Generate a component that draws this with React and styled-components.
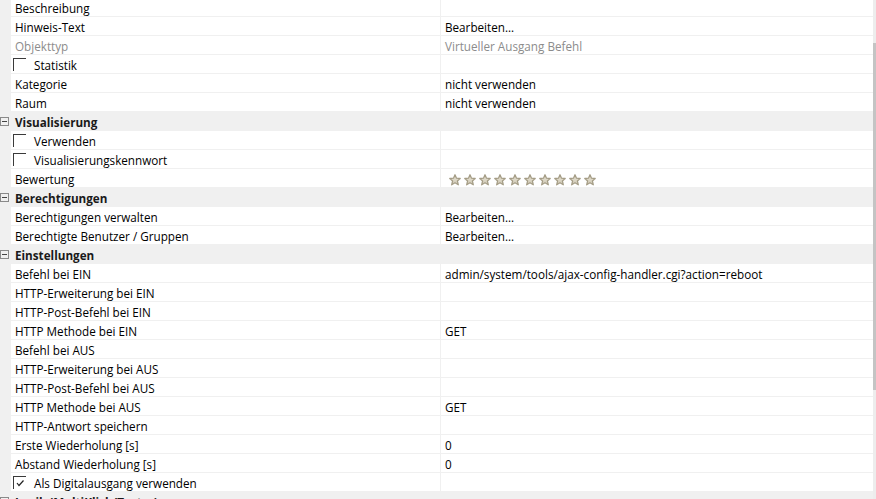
import React from "react";
import styled, { createGlobalStyle } from "styled-components";

/* ================= STYLES ================= */

const GlobalStyle = createGlobalStyle`
  html, body {
    margin: 0;
    padding: 0;
    background: #ffffff;
    overflow: hidden;
  }
  body {
    font-family: "Segoe UI", "Open Sans", "Noto Sans", sans-serif;
    font-size: 11.7px;
    color: #000;
  }
`;

const Frame = styled.div`
  width: 876px;
  height: 499px;
  display: flex;
  overflow: hidden;
`;

const Grid = styled.div`
  flex: 1;
  display: flex;
  flex-direction: column;
  margin-top: -2px;
`;

const Row = styled.div`
  display: grid;
  grid-template-columns: 11px 430px 1fr;
  height: 19px;
  flex-shrink: 0;
`;

const Gutter = styled.div`
  background: #f0f0f0;
`;

const Cell = styled.div`
  display: flex;
  align-items: center;
  box-sizing: border-box;
  height: 19px;
  padding-top: 3px;
  border-bottom: 1px solid #f0f0f0;
  color: ${({ $muted }) => ($muted ? "#8c8c8c" : "#000")};
  line-height: 15px;
  white-space: nowrap;
`;

const NameCell = styled(Cell)`
  gap: 8px;
  padding-left: ${({ $check }) => ($check ? "2px" : "4px")};
  border-right: 1px solid #f0f0f0;
`;

const ValueCell = styled(Cell)`
  padding-left: 4px;
`;

const HeaderRow = styled.div`
  height: 19px;
  box-sizing: border-box;
  padding-top: 1px;
  flex-shrink: 0;
  display: flex;
  align-items: center;
  background: #f0f0f0;
  font-weight: 700;
  color: #1a1a1a;
  white-space: nowrap;
`;

const Toggle = styled.span`
  width: 7px;
  height: 7px;
  margin: -1px 6px 0 0;
  border: 1px solid #8a8a8a;
  position: relative;
  flex-shrink: 0;

  &::after {
    content: "";
    position: absolute;
    left: 1px;
    right: 1px;
    top: 3px;
    height: 1px;
    background: #444;
  }
`;

const Box = styled.span`
  width: 13px;
  height: 13px;
  margin-top: -2px;
  box-sizing: border-box;
  border-top: 1px solid #3a3a3a;
  border-left: 1px solid #3a3a3a;
  flex-shrink: 0;
  display: flex;
  align-items: center;
  justify-content: center;
`;

const Stars = styled.div`
  display: flex;
  gap: 3px;
  padding-left: 4px;
`;

const Scrollbar = styled.div`
  width: 3px;
  background: #ededed;
  display: flex;
  flex-direction: column;
  padding-top: 43px;
`;

const Thumb = styled.div`
  height: 347px;
  background: #c4c4c4;
`;

/* ================= DATA ================= */

const sections = [
  {
    rows: [
      { name: "Beschreibung" },
      { name: "Hinweis-Text", value: "Bearbeiten..." },
      { name: "Objekttyp", value: "Virtueller Ausgang Befehl", muted: true },
      { name: "Statistik", check: true },
      { name: "Kategorie", value: "nicht verwenden" },
      { name: "Raum", value: "nicht verwenden" },
    ],
  },
  {
    title: "Visualisierung",
    rows: [
      { name: "Verwenden", check: true },
      { name: "Visualisierungskennwort", check: true },
      { name: "Bewertung", stars: 10 },
    ],
  },
  {
    title: "Berechtigungen",
    rows: [
      { name: "Berechtigungen verwalten", value: "Bearbeiten..." },
      { name: "Berechtigte Benutzer / Gruppen", value: "Bearbeiten..." },
    ],
  },
  {
    title: "Einstellungen",
    rows: [
      { name: "Befehl bei EIN", value: "admin/system/tools/ajax-config-handler.cgi?action=reboot" },
      { name: "HTTP-Erweiterung bei EIN" },
      { name: "HTTP-Post-Befehl bei EIN" },
      { name: "HTTP Methode bei EIN", value: "GET" },
      { name: "Befehl bei AUS" },
      { name: "HTTP-Erweiterung bei AUS" },
      { name: "HTTP-Post-Befehl bei AUS" },
      { name: "HTTP Methode bei AUS", value: "GET" },
      { name: "HTTP-Antwort speichern" },
      { name: "Erste Wiederholung [s]", value: "0" },
      { name: "Abstand Wiederholung [s]", value: "0" },
      { name: "Als Digitalausgang verwenden", check: true, checked: true },
    ],
  },
  { title: "Logik (MultiKlick/Taster)", rows: [] },
];

/* ================= COMPONENTS ================= */

const Star = () => (
  <svg width="12" height="12" viewBox="0 0 12 12">
    <defs>
      <linearGradient id="starFill" x1="0" y1="0" x2="0" y2="1">
        <stop offset="0" stopColor="#e9e5d8" />
        <stop offset="1" stopColor="#cfc8b4" />
      </linearGradient>
    </defs>
    <path
      d="M6 0.8 L7.5 4.2 L11.2 4.5 L8.4 6.9 L9.3 10.8 L6 8.8 L2.7 10.8 L3.6 6.9 L0.8 4.5 L4.5 4.2 Z"
      fill="url(#starFill)"
      stroke="#a59d86"
      strokeWidth="1.3"
      strokeLinejoin="round"
    />
  </svg>
);

const Check = () => (
  <svg width="10" height="10" viewBox="0 0 10 10">
    <path d="M2 5 L4 7.5 L8.5 2.5" fill="none" stroke="#222" strokeWidth="1.2" />
  </svg>
);

const PropRow = ({ row }) => (
  <Row>
    <Gutter />
    <NameCell $muted={row.muted} $check={row.check}>
      {row.check && <Box>{row.checked && <Check />}</Box>}
      {row.name}
    </NameCell>
    <ValueCell $muted={row.muted}>
      {row.stars ? (
        <Stars>
          {Array.from({ length: row.stars }).map((_, i) => (
            <Star key={i} />
          ))}
        </Stars>
      ) : (
        row.value
      )}
    </ValueCell>
  </Row>
);

const App = () => (
  <>
    <GlobalStyle />
    <Frame>
      <Grid>
        {sections.map((s, i) => (
          <React.Fragment key={i}>
            {s.title && (
              <HeaderRow>
                <Toggle />
                {s.title}
              </HeaderRow>
            )}
            {s.rows.map((r) => (
              <PropRow key={r.name} row={r} />
            ))}
          </React.Fragment>
        ))}
      </Grid>
      <Scrollbar>
        <Thumb />
      </Scrollbar>
    </Frame>
  </>
);

export default App;
